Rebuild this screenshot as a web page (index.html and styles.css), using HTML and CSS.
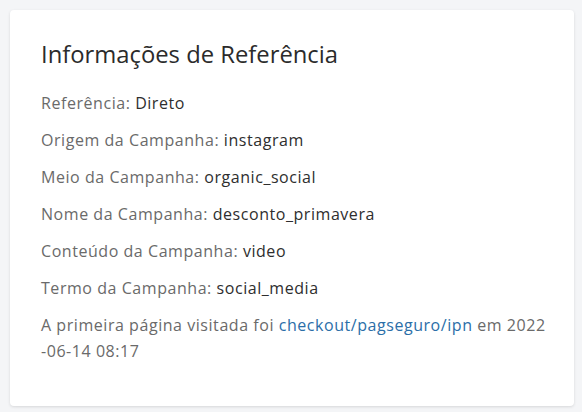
FILE: index.html
```html
<!DOCTYPE html>
<html lang="pt-BR">
<head>
    <meta charset="UTF-8">
    <meta name="viewport" content="width=device-width, initial-scale=1.0">
    <title>Informações de Referência</title>
    <link rel="stylesheet" href="styles.css">
</head>
<body>
    <div class="card">
        <h2 class="card-title">Informações de Referência</h2>

        <p class="info-row"><span class="label">Referência</span>: <span class="value">Direto</span></p>
        <p class="info-row"><span class="label">Origem da Campanha</span>: <span class="value">instagram</span></p>
        <p class="info-row"><span class="label">Meio da Campanha</span>: <span class="value">organic_social</span></p>
        <p class="info-row"><span class="label">Nome da Campanha</span>: <span class="value">desconto_primavera</span></p>
        <p class="info-row"><span class="label">Conteúdo da Campanha</span>: <span class="value">video</span></p>
        <p class="info-row"><span class="label">Termo da Campanha</span>: <span class="value">social_media</span></p>

        <p class="info-row first-visit">
            A primeira página visitada foi <a href="#" class="link">checkout/pagseguro/ipn</a> em 2022<br>-06-14 08:17
        </p>
    </div>
</body>
</html>
```

FILE: styles.css
```css
* {
    margin: 0;
    padding: 0;
    box-sizing: border-box;
}

body {
    font-family: 'Open Sans', 'Liberation Sans', sans-serif;
    background: #f4f5f7;
    padding: 10px 8px 6px 10px;
    height: 100vh;
    color: #333;
}

.card {
    background: #fff;
    border-radius: 4px;
    box-shadow: 0 1px 3px rgba(0, 0, 0, 0.12);
    padding: 28px 14px 30px 31px;
    height: 396px;
}

.card-title {
    font-size: 23.8px;
    font-weight: 400;
    color: #2b2b2b;
    line-height: 32px;
    margin-bottom: 20px;
}

.info-row {
    font-size: 16px;
    letter-spacing: 0.55px;
    line-height: 26px;
    margin-bottom: 11px;
    color: #6a6a6a;
}

.value {
    color: #2e2e2e;
}

.first-visit {
    color: #6a6a6a;
}

.link {
    color: #2b6ea8;
    text-decoration: none;
}
```
